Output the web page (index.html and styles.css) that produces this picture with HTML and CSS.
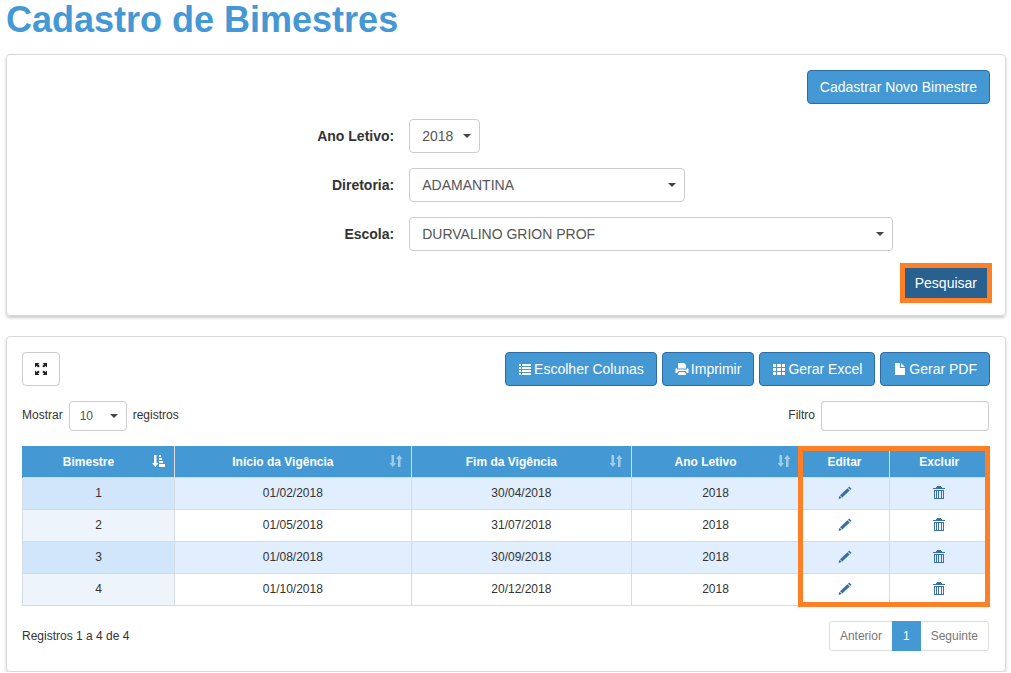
FILE: index.html
```html
<!DOCTYPE html>
<html lang="pt-BR">
<head>
<meta charset="utf-8">
<title>Cadastro de Bimestres</title>
<link rel="stylesheet" href="styles.css">
</head>
<body>
<svg class="sprite" aria-hidden="true">
  <symbol id="i-expand" viewBox="0 0 14 14"><path d="M1 1h4.500l-1.400 1.400 1.700 1.700-1.500 1.500-1.700-1.700L1 5.500zM13 1v4.500l-1.500-1.500-1.700 1.600-1.500-1.500 1.700-1.700L8.500 1zM1 13V8.500l1.500 1.500 1.700-1.600 1.500 1.500L4 11.500 5.500 13zM13 13H8.500l1.500-1.500-1.700-1.600 1.500-1.500 1.700 1.600L13 8.500z"/></symbol>
  <symbol id="i-list" viewBox="0 0 14 14"><path d="M1 2h2v2H1zM4 2h9v2H4zM1 5h2v2H1zM4 5h9v2H4zM1 8h2v2H1zM4 8h9v2H4zM1 11h2v2H1zM4 11h9v2H4z"/></symbol>
  <symbol id="i-print" viewBox="0 0 14 14"><path d="M4 1h5l2 2v3.500H3V1zM1.500 6H2v1.500h10V6h.500l1 1v4h-1.800l-1-2H3.300l-1 2H.500V7zM4 10h6l1.200 3H2.800z"/></symbol>
  <symbol id="i-grid" viewBox="0 0 14 14"><path d="M1 2h3v3H1zM5 2h4v3H5zM10 2h3v3h-3zM1 6h3v3H1zM5 6h4v3H5zM10 6h3v3h-3zM1 10h3v3H1zM5 10h4v3H5zM10 10h3v3h-3z"/></symbol>
  <symbol id="i-file" viewBox="0 0 14 14"><path d="M2 1h5v5h5v7H2zM8 1l4 4H8z"/></symbol>
  <symbol id="i-sorted" viewBox="0 0 14 14"><path d="M2 1h2.500v8H6.500l-3.200 4L0 9h2zM7 1h2v2H7zM7 4h3v2H7zM7 7h4v2H7zM7 10h6v3H7z"/></symbol>
  <symbol id="i-sort" viewBox="0 0 14 14"><path d="M2.500 1H5v8h2l-3.200 4L.500 9h2zM9 13h2.500V5h2l-3.200-4L7 5h2z"/></symbol>
  <symbol id="i-pencil" viewBox="0 0 14 14"><path d="M11.200 .5 13.500 2.800 12.200 4 10 1.700zM9.400 2.200l2.300 2.300-7.400 7L2 9.200zM1.500 9.700l2.300 2.300L.5 13z"/></symbol>
  <symbol id="i-trash" viewBox="0 0 14 14"><path fill-rule="evenodd" d="M4 2V1h6v1h3v1H1V2zM2 4h10v9H2zm1 1v7h1V5zm2 0v7h1V5zm2 0v7h2V5zm3 0v7h1V5zM5 0h4v1H5z"/></symbol>
</svg>
<main class="page">
  <h1 class="title">Cadastro de Bimestres</h1>

  <form class="panel search">
    <div class="actions"><button type="button" class="btn">Cadastrar Novo Bimestre</button></div>
    <div class="field">
      <label for="ano">Ano Letivo:</label>
      <span class="select select-year"><select id="ano"><option>2018</option></select></span>
    </div>
    <div class="field">
      <label for="diretoria">Diretoria:</label>
      <span class="select select-board"><select id="diretoria"><option>ADAMANTINA</option></select></span>
    </div>
    <div class="field">
      <label for="escola">Escola:</label>
      <span class="select select-school"><select id="escola"><option>DURVALINO GRION PROF</option></select></span>
    </div>
    <div class="actions"><button type="button" class="btn btn-search">Pesquisar</button></div>
  </form>

  <section class="panel results">
    <div class="toolbar">
      <button type="button" class="btn btn-plain" aria-label="Expandir"><svg class="icon"><use href="#i-expand"/></svg></button>
      <div class="group">
        <button type="button" class="btn"><svg class="icon"><use href="#i-list"/></svg>Escolher Colunas</button>
        <button type="button" class="btn"><svg class="icon"><use href="#i-print"/></svg>Imprimir</button>
        <button type="button" class="btn"><svg class="icon"><use href="#i-grid"/></svg>Gerar Excel</button>
        <button type="button" class="btn"><svg class="icon"><use href="#i-file"/></svg>Gerar PDF</button>
      </div>
    </div>
    <div class="filters">
      <div class="filter"><label for="qtd">Mostrar</label><span class="select select-small"><select id="qtd"><option>10</option></select></span><label for="qtd">registros</label></div>
      <div class="filter"><label for="filtro">Filtro</label><input id="filtro" type="text" class="input"></div>
    </div>
    <div class="table-wrap">
      <table class="table">
        <colgroup><col class="c-num"><col class="c-start"><col class="c-end"><col class="c-year"><col class="c-edit"><col class="c-delete"></colgroup>
        <thead>
          <tr>
            <th><div class="head">Bimestre<svg class="icon"><use href="#i-sorted"/></svg></div></th>
            <th><div class="head">Início da Vigência<svg class="icon dim"><use href="#i-sort"/></svg></div></th>
            <th><div class="head">Fim da Vigência<svg class="icon dim"><use href="#i-sort"/></svg></div></th>
            <th><div class="head">Ano Letivo<svg class="icon dim"><use href="#i-sort"/></svg></div></th>
            <th>Editar</th>
            <th>Excluir</th>
          </tr>
        </thead>
        <tbody>
          <tr><td>1</td><td>01/02/2018</td><td>30/04/2018</td><td>2018</td><td><a href="#" aria-label="Editar"><svg class="icon"><use href="#i-pencil"/></svg></a></td><td><a href="#" aria-label="Excluir"><svg class="icon"><use href="#i-trash"/></svg></a></td></tr>
          <tr><td>2</td><td>01/05/2018</td><td>31/07/2018</td><td>2018</td><td><a href="#" aria-label="Editar"><svg class="icon"><use href="#i-pencil"/></svg></a></td><td><a href="#" aria-label="Excluir"><svg class="icon"><use href="#i-trash"/></svg></a></td></tr>
          <tr><td>3</td><td>01/08/2018</td><td>30/09/2018</td><td>2018</td><td><a href="#" aria-label="Editar"><svg class="icon"><use href="#i-pencil"/></svg></a></td><td><a href="#" aria-label="Excluir"><svg class="icon"><use href="#i-trash"/></svg></a></td></tr>
          <tr><td>4</td><td>01/10/2018</td><td>20/12/2018</td><td>2018</td><td><a href="#" aria-label="Editar"><svg class="icon"><use href="#i-pencil"/></svg></a></td><td><a href="#" aria-label="Excluir"><svg class="icon"><use href="#i-trash"/></svg></a></td></tr>
        </tbody>
      </table>
      <div class="highlight"></div>
    </div>
    <div class="footer">
      <span>Registros 1 a 4 de 4</span>
      <nav class="pager"><a href="#">Anterior</a><a href="#" class="current">1</a><a href="#">Seguinte</a></nav>
    </div>
  </section>
</main>
</body>
</html>
```
FILE: styles.css
```css
* { box-sizing: border-box; }
body {
  margin: 0;
  background: #fff;
  color: #333;
  font: 14px/20px "Liberation Sans", Arial, sans-serif;
}
.sprite { display: none; }
.page { padding: 0 5px 0 6px; }
.title {
  margin: 0 0 14px;
  color: #4499d5;
  font-size: 36px;
  line-height: 40px;
}
.panel {
  border: 1px solid #d9d9d9;
  border-radius: 4px;
  padding: 15px;
  margin-bottom: 20px;
  box-shadow: 0 2px 3px rgba(0, 0, 0, 0.2);
}
.search { padding-bottom: 12px; }
.actions { display: flex; justify-content: flex-end; }
.btn {
  display: flex;
  align-items: center;
  gap: 2px;
  height: 34px;
  padding: 0 12px;
  border: 1px solid #2e6da4;
  border-radius: 4px;
  background: #4499d5;
  color: #fff;
  font: inherit;
  white-space: nowrap;
}
.btn-search {
  height: 40px;
  margin: -3px -2px 0 0;
  padding: 0 10px;
  border: 5px solid #ff7f27;
  border-radius: 0;
  background: #286090;
}
.btn-plain { padding: 0 11px; border-color: #ccc; background: #fff; color: #222; }
.icon { display: block; flex: none; width: 14px; height: 14px; fill: currentColor; }
.field {
  display: grid;
  grid-template-columns: 40% 1fr;
  align-items: center;
  margin: 15px 0;
}
.field label { padding-right: 15px; text-align: right; font-weight: bold; }
.select { display: block; position: relative; height: 34px; }
.select::after {
  content: "";
  position: absolute;
  right: 9px;
  top: 50%;
  margin-top: -2px;
  border: 4px solid transparent;
  border-top-color: #444;
  border-bottom: 0;
  pointer-events: none;
}
.select select {
  width: 100%;
  height: 100%;
  padding: 0 12px;
  border: 1px solid #ccc;
  border-radius: 4px;
  appearance: none;
  background: #fff;
  color: #555;
  font: inherit;
}
.select-year { width: 71px; }
.select-board { width: 276px; }
.select-school { width: 484px; }
.select-small { width: 58px; height: 30px; }
.select-small select { padding: 0 10px; }
.results { margin-bottom: 0; padding-bottom: 20px; }
.toolbar, .filters, .footer { display: flex; justify-content: space-between; }
.group { display: flex; gap: 5px; }
.filters { margin: 15px 1px 15px 0; font-size: 12px; }
.filter { display: flex; align-items: center; gap: 6px; }
.filter label { padding-bottom: 2px; }
.input {
  width: 168px;
  height: 30px;
  padding: 4px 10px;
  border: 1px solid #ccc;
  border-radius: 3px;
  font: inherit;
}
.table-wrap { position: relative; margin-right: 1px; }
.table {
  width: 100%;
  table-layout: fixed;
  border-collapse: collapse;
  font-size: 12px;
  line-height: 20px;
  text-align: center;
}
.c-num { width: 152px; }
.c-start { width: 24.5%; }
.c-year { width: 168px; }
.c-edit { width: 90px; }
.c-delete { width: 99px; }
.table th {
  height: 31px;
  padding: 1px 0 0;
  border-left: 1px solid #ddd;
  background: #4499d5;
  color: #fff;
}
.table th:first-child { border-left-color: #4499d5; }
.head { position: relative; padding: 0 28px 0 8px; }
.head .icon { position: absolute; right: 8px; top: 2px; }
.dim { opacity: 0.5; }
.table td { height: 32px; padding: 0; border: 1px solid #d5dbe2; }
.table td:first-child { background: #edf4fb; }
.table tr:nth-child(odd) td { background: #e1eefe; }
.table tr:nth-child(odd) td:first-child { background: #d1e6fb; }
.table a { color: #3c6fa8; }
.table a .icon { margin: 0 auto; }
.highlight {
  position: absolute;
  top: 0;
  right: -1px;
  bottom: -1px;
  width: 192px;
  border: 5px solid #ff7f27;
  pointer-events: none;
}
.footer { margin: 15px 1px 0 0; font-size: 12px; line-height: 30px; }
.pager {
  display: flex;
  height: 30px;
  border: 1px solid #ddd;
  border-radius: 3px;
  line-height: 28px;
}
.pager a { padding: 0 10px; color: #777; text-decoration: none; }
.pager .current { margin: -1px 0; padding: 1px 11px; background: #4499d5; color: #fff; }
```
